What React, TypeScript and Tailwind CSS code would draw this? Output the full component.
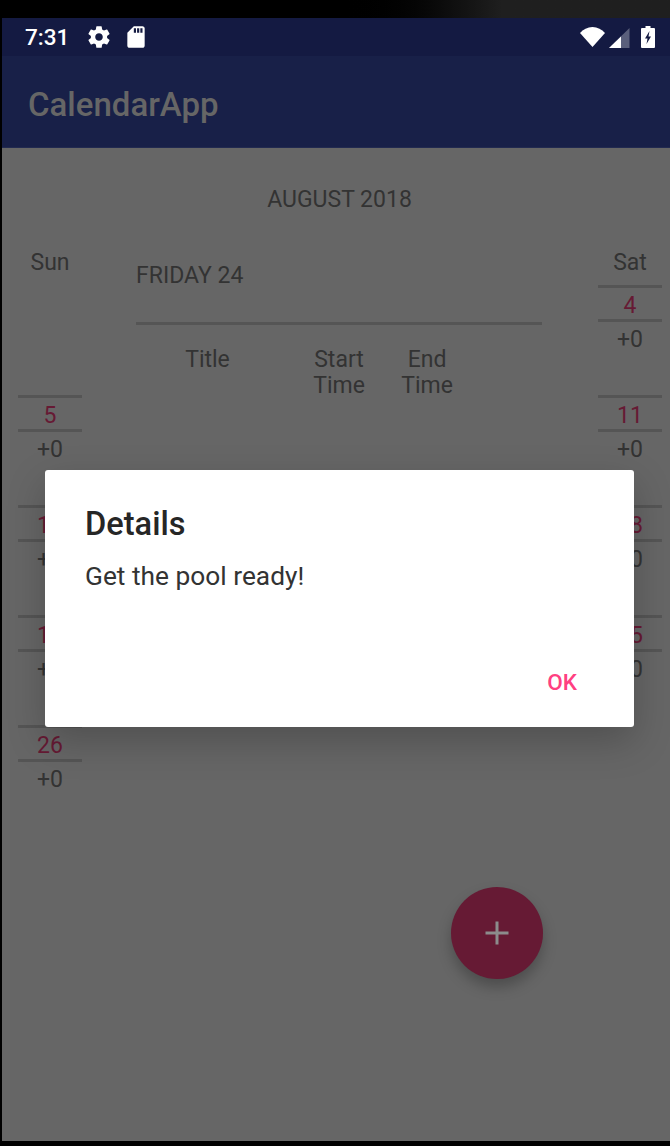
const font = { fontFamily: "Roboto, sans-serif" };

function DayCell({ day, empty }: { day?: string; empty?: boolean }) {
  return (
    <div className="h-[110px] w-16">
      {!empty && (
        <>
          <div className="h-[37px] border-y-[3px] border-[#555555] pt-[3px] text-center text-[23px] leading-[30px] text-[#661a34]">
            {day}
          </div>
          <div className="mt-[4px] text-center text-[23px] leading-[28px] text-[#333333]">+0</div>
        </>
      )}
    </div>
  );
}

function DayColumn({ name, days }: { name: string; days: (string | null)[] }) {
  return (
    <div className="flex w-16 flex-col">
      <div className="h-[37px] pt-[2px] text-center text-[23px] leading-[26px] text-[#333333]">{name}</div>
      {days.map((d, i) => (
        <DayCell key={i} day={d ?? undefined} empty={d === null} />
      ))}
    </div>
  );
}

export default function App() {
  return (
    <div style={font} className="relative flex h-[1146px] w-[670px] flex-col overflow-hidden bg-black pb-[5px] pl-[2px]">
      <div className="-ml-[2px] h-[18px] shrink-0 bg-gradient-to-r from-black from-50% to-[#1f1f1f] to-75%" />
      <div className="flex h-[38px] shrink-0 items-center justify-between bg-[#141a42] pl-[23px] pr-[15px] text-white">
        <div className="flex items-center">
          <span className="text-[22.5px] font-medium leading-none">7:31</span>
          <svg className="ml-[17px]" width="26" height="26" viewBox="0 0 24 24" fill="white">
            <path d="M19.43 12.98c.04-.32.07-.64.07-.98s-.03-.66-.07-.98l2.11-1.65c.19-.15.24-.42.12-.64l-2-3.46c-.12-.22-.39-.3-.61-.22l-2.49 1c-.52-.4-1.08-.73-1.69-.98l-.38-2.65C14.46 2.18 14.25 2 14 2h-4c-.25 0-.46.18-.49.42l-.38 2.65c-.61.25-1.17.59-1.69.98l-2.49-1c-.23-.09-.49 0-.61.22l-2 3.46c-.13.22-.07.49.12.64l2.11 1.65c-.04.32-.07.65-.07.98s.03.66.07.98l-2.11 1.65c-.19.15-.24.42-.12.64l2 3.46c.12.22.39.3.61.22l2.49-1c.52.4 1.08.73 1.69.98l.38 2.65c.03.24.24.42.49.42h4c.25 0 .46-.18.49-.42l.38-2.65c.61-.25 1.17-.59 1.69-.98l2.49 1c.23.09.49 0 .61-.22l2-3.46c.12-.22.07-.49-.12-.64l-2.11-1.65zM12 15.5c-1.93 0-3.5-1.57-3.5-3.5s1.57-3.5 3.5-3.5 3.5 1.57 3.5 3.5-1.57 3.5-3.5 3.5z" />
          </svg>
          <svg className="ml-[11px]" width="26" height="26" viewBox="0 0 24 24" fill="white">
            <path d="M18 2h-8L4.02 8 4 20c0 1.1.9 2 2 2h12c1.100 0 2-.9 2-2V4c0-1.100-.9-2-2-2zm-6 6h-2V4h2v4zm3 0h-2V4h2v4zm3 0h-2V4h2v4z" />
          </svg>
        </div>
        <div className="flex items-center">
          <svg width="26" height="22" viewBox="0 0 26 22" fill="white">
            <path d="M0 7C3.300 3.400 7.400 1 12.500 1S21.700 3.400 25 7L12.500 21 0 7z" />
          </svg>
          <svg className="ml-[3px]" width="21" height="21" viewBox="0 0 21 21">
            <path d="M20.500 1v20H0z" fill="white" fillOpacity="0.3" />
            <path d="M12 9.500V21H0z" fill="white" />
          </svg>
          <svg className="ml-[11px]" width="14" height="22" viewBox="0 0 14 22" fill="white">
            <path fillRule="evenodd" d="M4.500 0h5v2H13a1 1 0 0 1 1 1v18a1 1 0 0 1-1 1H1a1 1 0 0 1-1-1V3a1 1 0 0 1 1-1h3.500z" />
            <path d="M8.500 5 4 12.500h2.500L5.500 18 10 10.500H7.500z" fill="#141a42" />
          </svg>
        </div>
      </div>
      <div className="flex h-[92px] shrink-0 items-center border-b border-[#222a50] bg-[#182048] pl-[26px] pt-[5px]">
        <h1 className="text-[33px] font-medium leading-none text-[#666666]">CalendarApp</h1>
      </div>
      <main className="flex flex-1 flex-col bg-[#666666] text-[#333333]">
        <div className="pl-[7px] pt-[38px] text-center text-[23px] leading-[28px]">AUGUST 2018</div>
        <div className="mt-[34px] flex pl-[16px]">
          <DayColumn name="Sun" days={[null, "5", "12", "19", "26"]} />
          <section className="ml-[54px] w-[406px]">
            <div className="h-[77px] border-b-[3px] border-[#555555] pt-[15px] text-[23px] leading-[26px]">FRIDAY 24</div>
            <div className="mt-[22px] flex text-center text-[23px] leading-[26px]">
              <div className="w-[143px]">Title</div>
              <div className="w-[120px]">Start<br />Time</div>
              <div className="w-[56px]">End<br />Time</div>
            </div>
          </section>
          <div className="ml-[56px]">
            <DayColumn name="Sat" days={["4", "11", "18", "25"]} />
          </div>
        </div>
      </main>

      <div className="absolute left-[45px] top-[470px] h-[257px] w-[589px] rounded-[3px] bg-white shadow-[0_14px_38px_rgba(0,0,0,0.22)]">
        <div className="pl-[40px] pt-[36px] text-[32.6px] font-medium leading-[36px] text-[#262626]">Details</div>
        <div className="pl-[40px] pt-[18px] text-[26.3px] leading-[32px] text-[#333333]">Get the pool ready!</div>
        <div className="absolute bottom-[32px] right-[57px] text-[22.5px] font-medium leading-[26px] text-[#ff4081]">OK</div>
      </div>

      <button className="absolute left-[451px] top-[887px] flex h-[92px] w-[92px] items-center justify-center rounded-full bg-[#661a34] shadow-[0_8px_14px_rgba(0,0,0,0.25)]">
        <svg width="24" height="24" viewBox="0 0 24 24" stroke="#8c8c8c" strokeWidth="3" fill="none">
          <path d="M12 0.500v23M0.500 12h23" />
        </svg>
      </button>
    </div>
  );
}
